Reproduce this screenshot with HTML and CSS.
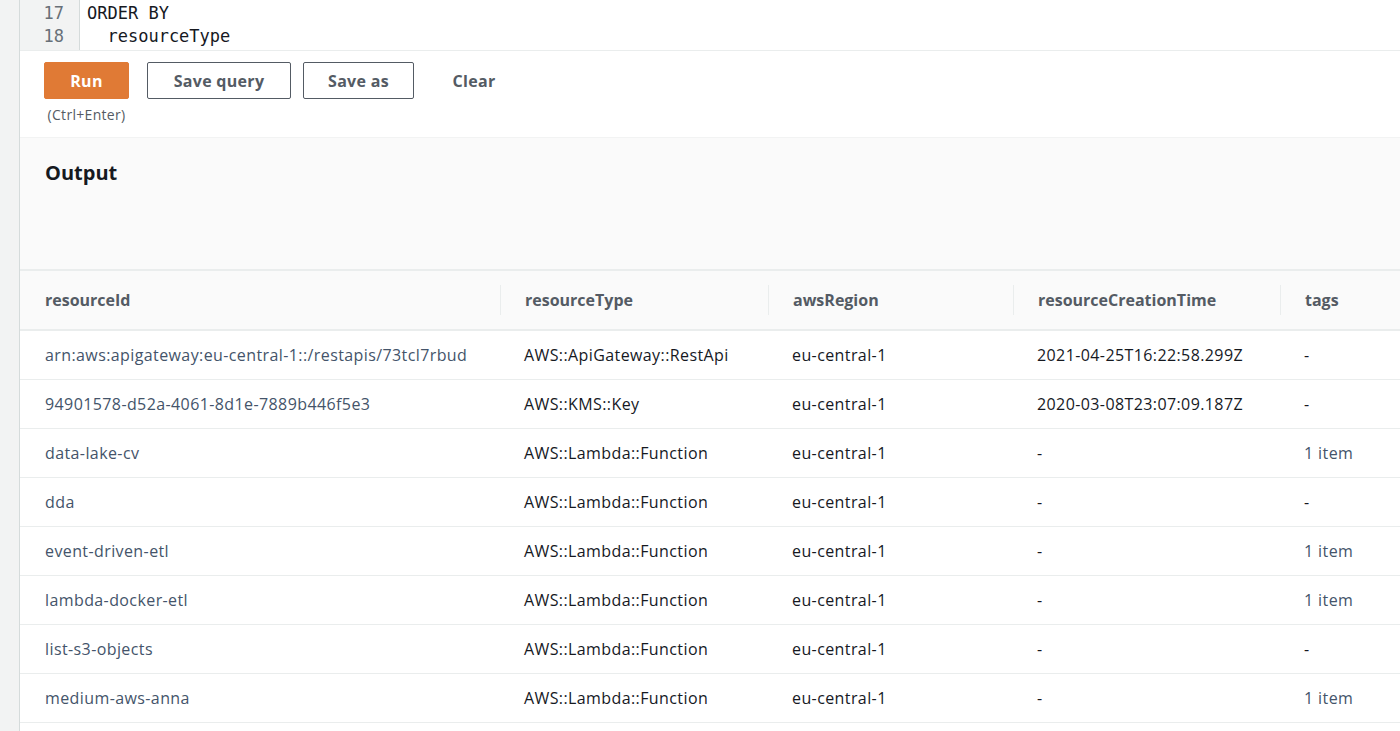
FILE: index.html
```html
<!DOCTYPE html>
<html>
<head>
<meta charset="utf-8">
<link rel="stylesheet" href="styles.css">
</head>
<body>
<div class="page">
  <div class="side"></div>
  <div class="main">
    <div class="editor">
      <div class="gutter">
        <div class="ln">17</div>
        <div class="ln">18</div>
      </div>
      <div class="code">
        <div class="cl">ORDER BY</div>
        <div class="cl">  resourceType</div>
      </div>
    </div>
    <div class="actions">
      <div class="run-wrap">
        <button class="btn btn-primary">Run</button>
        <div class="hint">(Ctrl+Enter)</div>
      </div>
      <button class="btn btn-save">Save query</button>
      <button class="btn btn-saveas">Save as</button>
      <button class="btn btn-link">Clear</button>
    </div>
    <div class="output">
      <h2 class="output-title">Output</h2>
    </div>
    <table class="results">
      <colgroup>
        <col class="c1"><col class="c2"><col class="c3"><col class="c4"><col class="c5">
      </colgroup>
      <thead>
        <tr>
          <th><span class="th-in">resourceId</span></th>
          <th><span class="th-in">resourceType</span></th>
          <th><span class="th-in">awsRegion</span></th>
          <th><span class="th-in">resourceCreationTime</span></th>
          <th><span class="th-in">tags</span></th>
        </tr>
      </thead>
      <tbody>
        <tr><td class="lnk">arn:aws:apigateway:eu-central-1::/restapis/73tcl7rbud</td><td>AWS::ApiGateway::RestApi</td><td>eu-central-1</td><td>2021-04-25T16:22:58.299Z</td><td>-</td></tr>
        <tr><td class="lnk">94901578-d52a-4061-8d1e-7889b446f5e3</td><td>AWS::KMS::Key</td><td>eu-central-1</td><td>2020-03-08T23:07:09.187Z</td><td>-</td></tr>
        <tr><td class="lnk">data-lake-cv</td><td>AWS::Lambda::Function</td><td>eu-central-1</td><td>-</td><td class="lnk">1 item</td></tr>
        <tr><td class="lnk">dda</td><td>AWS::Lambda::Function</td><td>eu-central-1</td><td>-</td><td>-</td></tr>
        <tr><td class="lnk">event-driven-etl</td><td>AWS::Lambda::Function</td><td>eu-central-1</td><td>-</td><td class="lnk">1 item</td></tr>
        <tr><td class="lnk">lambda-docker-etl</td><td>AWS::Lambda::Function</td><td>eu-central-1</td><td>-</td><td class="lnk">1 item</td></tr>
        <tr><td class="lnk">list-s3-objects</td><td>AWS::Lambda::Function</td><td>eu-central-1</td><td>-</td><td>-</td></tr>
        <tr><td class="lnk">medium-aws-anna</td><td>AWS::Lambda::Function</td><td>eu-central-1</td><td>-</td><td class="lnk">1 item</td></tr>
        <tr><td class="lnk">&nbsp;</td><td></td><td></td><td></td><td></td></tr>
      </tbody>
    </table>
  </div>
</div>
</body>
</html>
```
FILE: styles.css
```css
html, body {
  margin: 0;
  padding: 0;
  background: #ffffff;
  overflow: hidden;
}
body {
  font-family: "Open Sans", "Noto Sans", sans-serif;
  color: #16191f;
}
.page {
  display: flex;
  width: 1400px;
  height: 731px;
  overflow: hidden;
}
.side {
  width: 19px;
  flex: none;
  background: #f2f3f3;
  border-right: 1px solid #d5dbdb;
}
.main {
  flex: 1;
  min-width: 0;
  background: #fff;
}
.editor {
  display: flex;
  height: 50px;
  border-bottom: 1px solid #eaeded;
  overflow: hidden;
}
.gutter {
  width: 60px;
  flex: none;
  background: #f2f3f3;
  border-right: 1px solid #d5dbdb;
  padding-top: 2px;
  box-sizing: border-box;
}
.ln {
  font-family: "DejaVu Sans Mono", monospace;
  font-size: 17px;
  line-height: 23px;
  color: #687078;
  text-align: right;
  padding-right: 15px;
}
.code {
  padding-left: 7px;
  padding-top: 2px;
}
.cl {
  font-family: "DejaVu Sans Mono", monospace;
  font-size: 17px;
  line-height: 23px;
  color: #16191f;
  white-space: pre;
}
.actions {
  display: flex;
  align-items: flex-start;
  padding: 11px 0 0 24px;
  height: 86px;
  box-sizing: border-box;
}
.run-wrap {
  display: flex;
  flex-direction: column;
  align-items: center;
  width: 85px;
  margin-right: 18px;
}
.btn {
  height: 37px;
  box-sizing: border-box;
  font-family: "Open Sans", "Noto Sans", sans-serif;
  font-weight: 700;
  font-size: 16px;
  letter-spacing: 0.3px;
  border-radius: 2px;
  padding: 0;
  cursor: pointer;
}
.btn-primary {
  width: 85px;
  background: #e07a35;
  border: 1px solid #e07a35;
  color: #fff;
}
.hint {
  font-size: 14px;
  letter-spacing: 0.3px;
  color: #545b64;
  margin-top: 7px;
  line-height: 17px;
  white-space: nowrap;
}
.btn-save {
  width: 144px;
  background: #fff;
  border: 1px solid #545b64;
  color: #545b64;
  margin-right: 12px;
}
.btn-saveas {
  width: 111px;
  background: #fff;
  border: 1px solid #545b64;
  color: #545b64;
  margin-right: 20px;
}
.btn-link {
  width: 80px;
  background: transparent;
  border: 1px solid transparent;
  color: #545b64;
}
.output {
  background: #fafafa;
  height: 132px;
  padding: 20px 0 0 25px;
  box-sizing: border-box;
  border-top: 1px solid #f2f3f3;
}
.output-title {
  margin: 0;
  font-size: 20px;
  font-weight: 700;
  line-height: 30px;
  color: #16191f;
}
.results {
  border-collapse: collapse;
  table-layout: fixed;
  width: 1400px;
}
.c1 { width: 480px; }
.c2 { width: 268px; }
.c3 { width: 245px; }
.c4 { width: 267px; }
.c5 { width: 140px; }
.results thead tr {
  background: #fafafa;
  border-top: 2px solid #eaeded;
  border-bottom: 2px solid #eaeded;
}
.results th {
  height: 58px;
  padding: 0;
  text-align: left;
  font-size: 16px;
  font-weight: 700;
  color: #545b64;
}
.th-in {
  display: block;
  padding-left: 24px;
  line-height: 30px;
  border-left: 1px solid #eaeded;
}
.results th:first-child .th-in {
  border-left: none;
  padding-left: 25px;
}
.results td {
  height: 48px;
  padding: 0 0 0 24px;
  font-size: 16px;
  letter-spacing: 0.4px;
  color: #16191f;
  border-bottom: 1px solid #eaeded;
  white-space: nowrap;
  overflow: hidden;
}
.results td:first-child {
  padding-left: 25px;
}
.results td.lnk {
  color: #44546a;
}
```
